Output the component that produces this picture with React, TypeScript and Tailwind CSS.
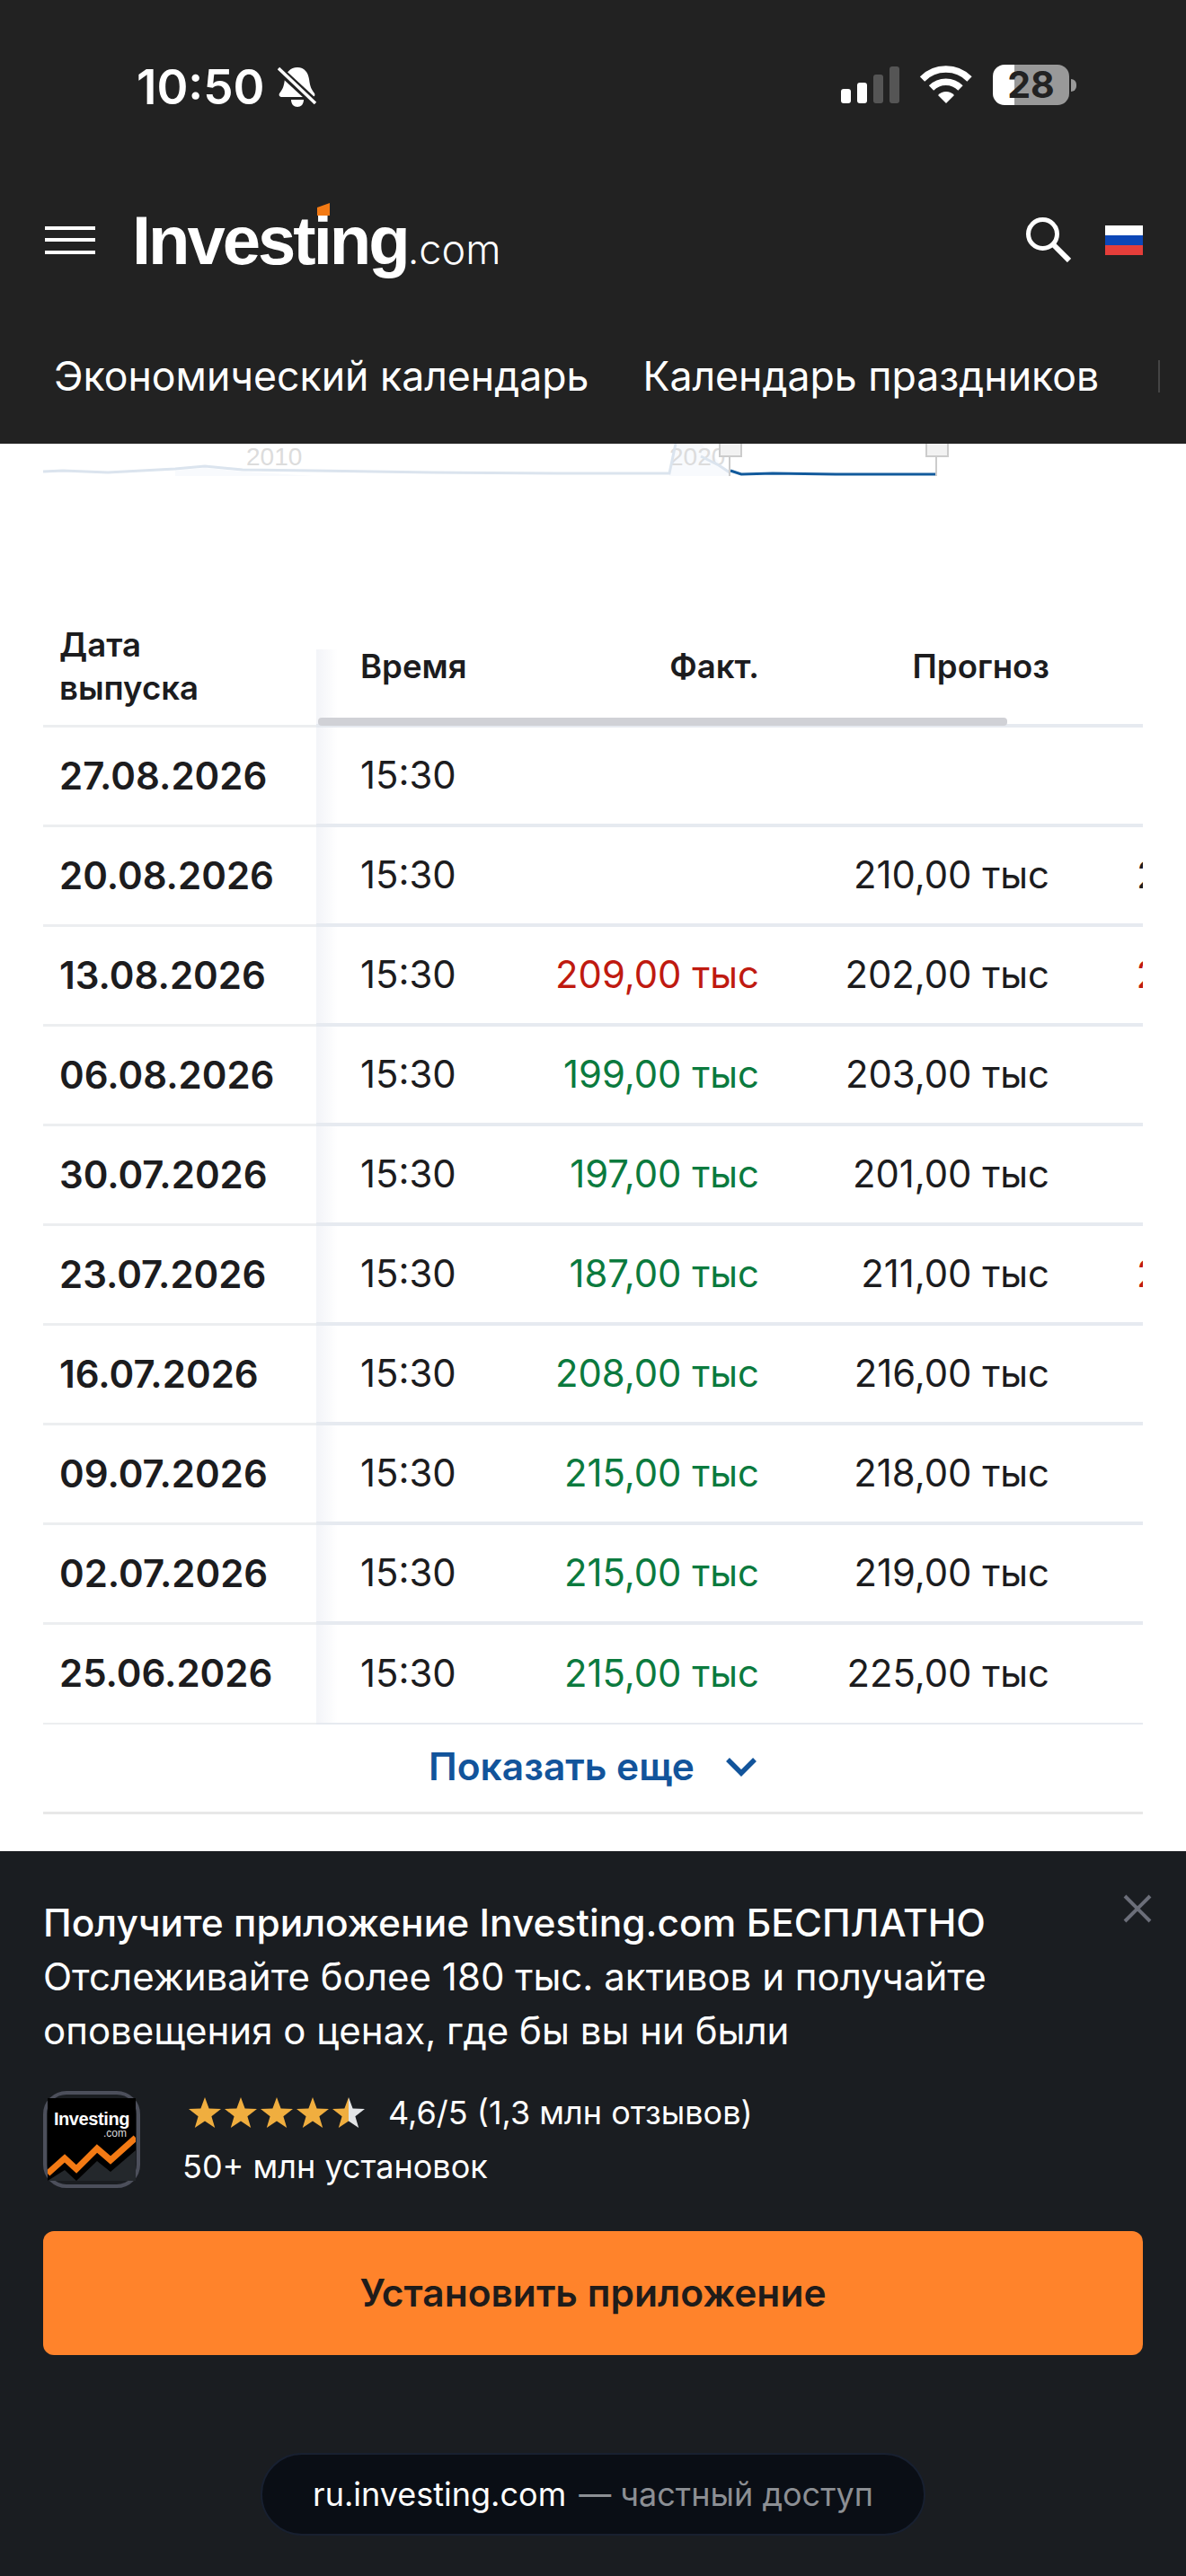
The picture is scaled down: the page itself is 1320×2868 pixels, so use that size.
const RED = 'text-[#bf1a10]';
const GREEN = 'text-[#0b7a3e]';

const ROWS = [
  { date: '27.08.2026', actual: '', forecast: '', previous: '', actualColor: '', previousColor: '' },
  { date: '20.08.2026', actual: '', forecast: '210,00 тыс', previous: '209,00 тыс', actualColor: '', previousColor: 'text-[#1c1c1e]' },
  { date: '13.08.2026', actual: '209,00 тыс', forecast: '202,00 тыс', previous: '200,00 тыс', actualColor: RED, previousColor: RED },
  { date: '06.08.2026', actual: '199,00 тыс', forecast: '203,00 тыс', previous: '197,00 тыс', actualColor: GREEN, previousColor: 'text-[#1c1c1e]' },
  { date: '30.07.2026', actual: '197,00 тыс', forecast: '201,00 тыс', previous: '187,00 тыс', actualColor: GREEN, previousColor: 'text-[#1c1c1e]' },
  { date: '23.07.2026', actual: '187,00 тыс', forecast: '211,00 тыс', previous: '208,00 тыс', actualColor: GREEN, previousColor: RED },
  { date: '16.07.2026', actual: '208,00 тыс', forecast: '216,00 тыс', previous: '175,00 тыс', actualColor: GREEN, previousColor: 'text-[#1c1c1e]' },
  { date: '09.07.2026', actual: '215,00 тыс', forecast: '218,00 тыс', previous: '175,00 тыс', actualColor: GREEN, previousColor: 'text-[#1c1c1e]' },
  { date: '02.07.2026', actual: '215,00 тыс', forecast: '219,00 тыс', previous: '175,00 тыс', actualColor: GREEN, previousColor: 'text-[#1c1c1e]' },
  { date: '25.06.2026', actual: '215,00 тыс', forecast: '225,00 тыс', previous: '175,00 тыс', actualColor: GREEN, previousColor: 'text-[#1c1c1e]' },
];

const STAR = 'M18 0 L22.6 12.4 L36 13 L25.4 21.2 L29.2 34 L18 26.6 L6.8 34 L10.6 21.2 L0 13 L13.4 12.4 Z';

function StatusBar() {
  return (
    <div className="flex h-[200px] items-start justify-between pt-[72px] pr-[122px] pl-[152px]">
      <div className="flex items-center gap-[14px]">
        <span className="text-[53px] leading-[50px] font-semibold text-white">10:50</span>
        <svg width="44" height="46" viewBox="0 0 44 46" fill="none">
          <path d="M22 1c8 0 12 6 13 13 1 9 3 12 6 16 1 2 0 4-3 4H5c-3 0-4-2-3-4 3-4 5-7 6-16C9 7 14 1 22 1z" fill="#fff" />
          <path d="M15 37h14c0 5-3 8-7 8s-7-3-7-8z" fill="#fff" />
          <path d="M2 4l40 37" stroke="#222222" strokeWidth="9" />
          <path d="M1 2l41 39" stroke="#fff" strokeWidth="3.5" />
        </svg>
      </div>
      <div className="flex items-end gap-[23px]">
        <div className="flex items-end gap-[7px]">
          <div className="h-[16px] w-[11px] rounded-[3px] bg-white" />
          <div className="h-[23px] w-[11px] rounded-[3px] bg-white" />
          <div className="h-[32px] w-[11px] rounded-[3px] bg-[#555555]" />
          <div className="h-[41px] w-[11px] rounded-[3px] bg-[#555555]" />
        </div>
        <svg width="58" height="42" viewBox="0 0 58 42" fill="none">
          <path d="M2.5 15 A37 37 0 0 1 55 15" stroke="#fff" strokeWidth="7.5" />
          <path d="M12.5 25 A23 23 0 0 1 45 25" stroke="#fff" strokeWidth="7.5" />
          <path d="M29 42 L20 33 A12 12 0 0 1 38 33 Z" fill="#fff" />
        </svg>
        <div className="-mb-[2px] flex items-center gap-[2px]">
          <div className="flex h-[45px] w-[85px] items-center justify-center rounded-[13px] bg-[linear-gradient(90deg,#fff_24px,#999999_24px)] text-[41px] leading-none font-bold text-[#222222]">
            28
          </div>
          <div className="h-[14px] w-[6px] rounded-r-[6px] bg-[#999999]" />
        </div>
      </div>
    </div>
  );
}

function Logo() {
  return (
    <div className="relative flex items-baseline text-white [font-family:'Liberation_Sans',sans-serif]">
      <span className="text-[76px] leading-[73px] font-bold tracking-[-3px]">Investing</span>
      <span className="text-[45px] leading-[44px] font-light [font-family:Inter,sans-serif]">.com</span>
      <svg className="absolute top-[-5px] left-[206px]" width="15" height="14" viewBox="0 0 15 14">
        <path d="M0 5 L14 0 V14 H0 Z" fill="#f37a14" />
      </svg>
    </div>
  );
}

function Header() {
  return (
    <header className="h-[494px] bg-[#222222]">
      <StatusBar />
      <div className="flex h-[130px] items-center pt-[4px] pr-[48px] pl-[50px]">
        <div className="flex h-[31px] w-[56px] flex-col justify-between">
          <div className="h-[4px] bg-white" />
          <div className="h-[4px] bg-white" />
          <div className="h-[4px] bg-white" />
        </div>
        <div className="ml-[41px]">
          <Logo />
        </div>
        <svg className="mr-[38px] ml-auto" width="50" height="50" viewBox="0 0 50 50" fill="none">
          <circle cx="18.5" cy="18.5" r="16" stroke="#fff" strokeWidth="5" />
          <path d="M30 30 L48 48" stroke="#fff" strokeWidth="6" />
        </svg>
        <div className="flex h-[33px] w-[42px] flex-col">
          <div className="h-[11px] bg-white" />
          <div className="h-[11px] bg-[#0c47b7]" />
          <div className="h-[11px] bg-[#e53e3a]" />
        </div>
      </div>
      <div className="mt-[39px] flex h-[100px] items-center pl-[60px] text-[44.6px] leading-none text-white">
        <span>Экономический календарь</span>
        <span className="ml-[60px]">Календарь праздников</span>
        <div className="ml-[66px] h-[36px] w-[2px] bg-[#444444]" />
      </div>
    </header>
  );
}

function Navigator() {
  return (
    <svg className="block" width="1320" height="188" viewBox="0 0 1320 188" fill="none">
      <path d="M745 32 L752 0 L780 0 L812 32 V36 H745 Z" fill="#f8fafd" />
      <path d="M195 30 L228 27 L270 31 L350 36 H195 Z" fill="#f8fafd" />
      <text x="274" y="24" fontSize="28" fill="#dcdcdc" fontFamily="Liberation Sans, sans-serif">2010</text>
      <text x="745" y="24" fontSize="28" fill="#dcdcdc" fontFamily="Liberation Sans, sans-serif">2020</text>
      <path
        d="M48 31 L70 30 L120 32 L195 28 L228 25 L270 29 L350 30 L480 32 L620 33 L745 33 L752 0 M780 14 L800 24 L812 32"
        stroke="#dbe4ee"
        strokeWidth="3"
      />
      <path d="M813 30 L825 34 L860 33 L930 34 L1042 34" stroke="#125a9c" strokeWidth="3" />
      <path d="M812 0 V36 M1042 0 V36" stroke="#cccccc" strokeWidth="2" />
      <rect x="801" y="-4" width="24" height="18" fill="#f2f2f2" stroke="#cccccc" strokeWidth="2" />
      <rect x="1031" y="-4" width="24" height="18" fill="#f2f2f2" stroke="#cccccc" strokeWidth="2" />
    </svg>
  );
}

function HistoryTable() {
  return (
    <div className="mx-[48px] overflow-hidden">
      <div className="flex h-[128px]">
        <div className="w-[304px] shrink-0 border-b-[3px] border-[#eceef0] pt-[12px] pl-[18px] text-[36.6px] leading-[48px] font-semibold text-[#1c1c1e]">
          Дата
          <br />
          выпуска
        </div>
        <div className="relative mt-[41px] flex w-[920px] shrink-0 border-b-4 border-[#e6eaf0] bg-[linear-gradient(90deg,#f3f4f8,#fff_24px)] text-[36.6px] leading-[38px] font-semibold text-[#1c1c1e]">
          <div className="w-[240px] shrink-0 pl-[49px]">Время</div>
          <div className="w-[253px] shrink-0 text-right">Факт.</div>
          <div className="w-[323px] shrink-0 text-right">Прогноз</div>
          <div className="absolute bottom-[-2px] left-[2px] h-[9px] w-[767px] rounded-[4px] bg-[#d0d1d6]" />
        </div>
      </div>
      {ROWS.map((row, i) => (
        <div key={row.date} className="flex h-[111px]">
          <div
            className={`flex w-[304px] shrink-0 items-center border-[#eceef0] pb-[2px] pl-[18px] text-[42px] font-semibold text-[#1c1c1e] ${
              i === ROWS.length - 1 ? 'border-b-2' : 'border-b-[3px]'
            }`}
          >
            {row.date}
          </div>
          <div
            className={`flex w-[920px] shrink-0 items-center overflow-hidden border-[#e6eaf0] bg-[linear-gradient(90deg,#f3f4f8,#fff_24px)] pb-[1px] text-[41.8px] whitespace-nowrap text-[#1c1c1e] ${
              i === ROWS.length - 1 ? 'border-b-2' : 'border-b-4'
            }`}
          >
            <div className="w-[240px] shrink-0 pl-[49px]">15:30</div>
            <div className={`w-[253px] shrink-0 text-right ${row.actualColor}`}>{row.actual}</div>
            <div className="w-[323px] shrink-0 text-right">{row.forecast}</div>
            <div className={`w-[324px] shrink-0 text-right ${row.previousColor}`}>{row.previous}</div>
          </div>
        </div>
      ))}
      <div className="flex h-[100px] items-center justify-center gap-[34px] border-b-[3px] border-[#e8e8e8] pb-[3px] text-[42.5px] font-semibold text-[#12549b]">
        <span>Показать еще</span>
        <svg width="36" height="22" viewBox="0 0 36 22" fill="none">
          <path d="M3 3 L18 18 L33 3" stroke="#12549b" strokeWidth="5.5" />
        </svg>
      </div>
    </div>
  );
}

function AppIcon() {
  return (
    <div className="flex h-[108px] w-[108px] shrink-0 items-center justify-center rounded-[26px] border-[4px] border-[#4c4f5b] bg-[#1a1d21]">
      <svg width="98" height="92" viewBox="0 0 98 92">
        <rect width="98" height="92" fill="#000" />
        <path d="M0 92 L19 80 L32 92 L55 70 L70 82 L98 58 V92 Z" fill="#24282c" />
        <path d="M0 84 L19 67 L32 79 L55 56 L70 69 L98 44" fill="none" stroke="#f37a14" strokeWidth="7" />
        <text x="49" y="30" textAnchor="middle" fontSize="20" fontWeight="700" fill="#fff" letterSpacing="-0.4" fontFamily="Liberation Sans, sans-serif">Investing</text>
        <text x="88" y="43" textAnchor="end" fontSize="12" fill="#ddd" fontFamily="Liberation Sans, sans-serif">.com</text>
      </svg>
    </div>
  );
}

function Stars() {
  return (
    <div className="flex gap-[4px]">
      {[0, 1, 2, 3].map((i) => (
        <svg key={i} width="36" height="34" viewBox="0 0 36 34">
          <path d={STAR} fill="#f0ae3f" />
        </svg>
      ))}
      <svg width="36" height="34" viewBox="0 0 36 34">
        <defs>
          <linearGradient id="half-star">
            <stop offset="50%" stopColor="#f0ae3f" />
            <stop offset="50%" stopColor="#e3e5e7" />
          </linearGradient>
        </defs>
        <path d={STAR} fill="url(#half-star)" />
      </svg>
    </div>
  );
}

function AppBanner() {
  return (
    <div className="relative mt-[41px] h-[807px] bg-[#1a1d21] px-[48px] pt-[50px] text-white">
      <svg className="absolute top-[48px] right-[38px]" width="32" height="32" viewBox="0 0 32 32" fill="none">
        <path d="M2 2 L30 30 M30 2 L2 30" stroke="#6b6e79" strokeWidth="4" />
      </svg>
      <div className="text-[42px] leading-[60px]">
        <div className="text-[42.5px] font-medium">Получите приложение Investing.com БЕСПЛАТНО</div>
        <div>Отслеживайте более 180 тыс. активов и получайте</div>
        <div>оповещения о ценах, где бы вы ни были</div>
      </div>
      <div className="mt-[37px] flex items-center gap-[49px]">
        <AppIcon />
        <div className="-ml-[2px] flex flex-col gap-[22px] text-[36px] leading-[38px]">
          <div className="flex items-center gap-[26px] pl-[7px]">
            <Stars />
            <span>4,6/5 (1,3 млн отзывов)</span>
          </div>
          <div>50+ млн установок</div>
        </div>
      </div>
      <button className="mt-[48px] h-[138px] w-full rounded-[12px] bg-[#ff832b] text-[42.5px] font-semibold text-[#1f1c1a]">
        Установить приложение
      </button>
      <div className="mt-[109px] flex justify-center">
        <div className="flex h-[92px] w-[740px] items-center justify-center rounded-[46px] border-2 border-[#182030] bg-[#0a0e15] text-[36px]">
          <span className="text-white">ru.investing.com</span>
          <span className="ml-[14px] text-[#8c8f94]">— частный доступ</span>
        </div>
      </div>
    </div>
  );
}

export default function App() {
  return (
    <div className="h-[2868px] w-[1320px] overflow-hidden bg-white [font-family:Inter,sans-serif]">
      <Header />
      <Navigator />
      <HistoryTable />
      <AppBanner />
    </div>
  );
}
